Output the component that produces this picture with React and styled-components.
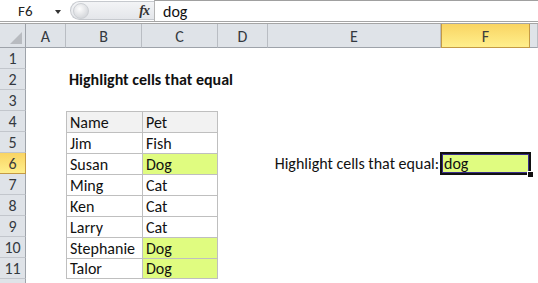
import React from "react";
import styled, { createGlobalStyle, css } from "styled-components";

const Global = createGlobalStyle`
  html, body { margin: 0; padding: 0; background: #fff; }
  body { font-family: Calibri, "Lato", "Liberation Sans", sans-serif; overflow: hidden; }
`;

const Window = styled.div`
  width: 538px;
  height: 283px;
  overflow: hidden;
  background: #fff;
  display: flex;
  flex-direction: column;
`;

const FormulaBar = styled.div`
  height: 21px;
  display: flex;
  align-items: stretch;
  border-bottom: 1px solid #a5a5a5;
  flex-shrink: 0;
`;

const NameBox = styled.div`
  width: 62px;
  display: flex;
  align-items: center;
  font-size: 15px;
  color: #222;
  padding-left: 18px;
  box-sizing: border-box;
  position: relative;
`;

const DropArrow = styled.span`
  position: absolute;
  left: 55px;
  top: 10px;
  width: 0;
  height: 0;
  border-left: 3.5px solid transparent;
  border-right: 3.5px solid transparent;
  border-top: 4px solid #333;
`;

const FxArea = styled.div`
  margin-left: 8px;
  width: 84px;
  margin-top: 1px;
  margin-bottom: 1px;
  background: linear-gradient(#f3f4f6, #e4e6ea);
  border: 1px solid #c6c9ce;
  border-right: none;
  border-radius: 10px 0 0 10px;
  display: flex;
  align-items: center;
  justify-content: space-between;
  padding: 0 5px 0 2px;
  box-sizing: border-box;
`;

const Knob = styled.span`
  width: 14px;
  height: 14px;
  border-radius: 50%;
  background: radial-gradient(circle at 40% 35%, #fdfdfd, #d8dade 70%, #c4c7cb);
  border: 1px solid #cdd0d4;
`;

const Fx = styled.span`
  font-family: "Liberation Serif", "DejaVu Serif", serif;
  font-style: italic;
  font-weight: bold;
  font-size: 14px;
  color: #333;
  letter-spacing: -1px;
`;

const FormulaInput = styled.div`
  flex: 1;
  border-top: 1px solid #a0a0a0;
  border-left: 1px solid #b5b5b5;
  display: flex;
  align-items: center;
  padding-left: 8px;
  font-size: 16px;
  color: #111;
`;

const Divider = styled.div`
  height: 1px;
  border-bottom: 1px solid #a5a5a5;
  flex-shrink: 0;
`;

const Sheet = styled.div`
  display: grid;
  grid-template-columns: 26px 40px 76px 76px 50px 173px 89px 1fr;
  grid-template-rows: 24px repeat(12, 21px);
`;

const headerSelected = css`
  background: linear-gradient(#f9d463, #ffef8c);
  border-color: #c49a45;
  color: #3c3c3c;
`;

const ColHead = styled.div`
  background: #dfe3e8;
  border-right: 1px solid #b9bdc3;
  border-bottom: 1px solid #9ea3aa;
  box-sizing: border-box;
  display: flex;
  align-items: center;
  justify-content: center;
  font-size: 16px;
  color: #34393f;
  padding-top: 1px;
  ${(p) => p.$selected && headerSelected}
  ${(p) => p.$selected && css`border-left: 1px solid #c49a45;`}
`;

const Corner = styled(ColHead)`
  position: relative;
  border-right-color: #9ea3aa;
  &::after {
    content: "";
    position: absolute;
    right: 3px;
    bottom: 3px;
    border-left: 12px solid transparent;
    border-bottom: 12px solid #b8bbc0;
  }
`;

const RowHead = styled.div`
  background: #dfe3e8;
  border-right: 1px solid #9ea3aa;
  border-bottom: 1px solid #c2c6cc;
  box-sizing: border-box;
  display: flex;
  align-items: center;
  justify-content: center;
  font-size: 16px;
  color: #34393f;
  ${(p) => p.$selected && headerSelected}
  ${(p) => p.$selected && css`border-right: 1px solid #c49a45;`}
`;

const Cell = styled.div`
  box-sizing: border-box;
  display: flex;
  align-items: center;
  padding-left: 3px;
  font-size: 16px;
  color: #111;
  white-space: nowrap;
  position: relative;
  background: ${(p) => p.$fill || "transparent"};
  font-weight: ${(p) => (p.$bold ? 700 : 400)};
  justify-content: ${(p) => (p.$right ? "flex-end" : "flex-start")};
  ${(p) => p.$right && css`padding-right: 2px;`}
  ${(p) => p.$spill && css`z-index: 1;`}
  ${(p) =>
    p.$table &&
    css`
      border-left: 1px solid #bfbfbf;
      border-top: 1px solid #bfbfbf;
    `}
  ${(p) => p.$lastCol && css`border-right: 1px solid #bfbfbf;`}
  ${(p) => p.$lastRow && css`border-bottom: 1px solid #bfbfbf;`}
`;

const Selection = styled.div`
  position: absolute;
  left: -1px;
  top: -1px;
  right: -1px;
  bottom: -1px;
  border: 2px solid #111;
  box-shadow: inset 0 0 0 1px #3a2d8c;
  pointer-events: none;
  &::after {
    content: "";
    position: absolute;
    right: -4px;
    bottom: -4px;
    width: 5px;
    height: 5px;
    background: #111;
    border-left: 1px solid #fff;
    border-top: 1px solid #fff;
  }
`;

const columns = ["A", "B", "C", "D", "E", "F", ""];
const green = "#e0fc80";
const pets = [
  ["Name", "Pet"],
  ["Jim", "Fish"],
  ["Susan", "Dog"],
  ["Ming", "Cat"],
  ["Ken", "Cat"],
  ["Larry", "Cat"],
  ["Stephanie", "Dog"],
  ["Talor", "Dog"],
];

function renderRow(r) {
  const cells = [];
  const tIdx = r - 4;
  const inTable = tIdx >= 0 && tIdx < pets.length;
  for (let c = 0; c < 7; c++) {
    const key = `${r}-${c}`;
    if (r === 2 && c === 1) {
      cells.push(
        <Cell key={key} $bold $spill>
          Highlight cells that equal
        </Cell>
      );
    } else if (inTable && (c === 1 || c === 2)) {
      const val = pets[tIdx][c - 1];
      let fill = "#fff";
      if (tIdx === 0) fill = "#f2f2f2";
      else if (c === 2 && val === "Dog") fill = green;
      cells.push(
        <Cell
          key={key}
          $table
          $fill={fill}
          $lastCol={c === 2}
          $lastRow={tIdx === pets.length - 1}
        >
          {val}
        </Cell>
      );
    } else if (r === 6 && c === 4) {
      cells.push(
        <Cell key={key} $right $spill>
          Highlight cells that equal:
        </Cell>
      );
    } else if (r === 6 && c === 5) {
      cells.push(
        <Cell key={key} $fill={green}>
          dog
          <Selection />
        </Cell>
      );
    } else {
      cells.push(<Cell key={key} />);
    }
  }
  return cells;
}

export default function App() {
  const rows = Array.from({ length: 12 }, (_, i) => i + 1);
  return (
    <Window>
      <Global />
      <FormulaBar>
        <NameBox>
          F6
          <DropArrow />
        </NameBox>
        <FxArea>
          <Knob />
          <Fx>fx</Fx>
        </FxArea>
        <FormulaInput>dog</FormulaInput>
      </FormulaBar>
      <Divider />
      <Sheet>
        <Corner />
        {columns.map((col, i) => (
          <ColHead key={i} $selected={col === "F"}>
            {col}
          </ColHead>
        ))}
        {rows.map((r) => (
          <React.Fragment key={r}>
            <RowHead $selected={r === 6}>{r < 12 ? r : ""}</RowHead>
            {renderRow(r)}
          </React.Fragment>
        ))}
      </Sheet>
    </Window>
  );
}
